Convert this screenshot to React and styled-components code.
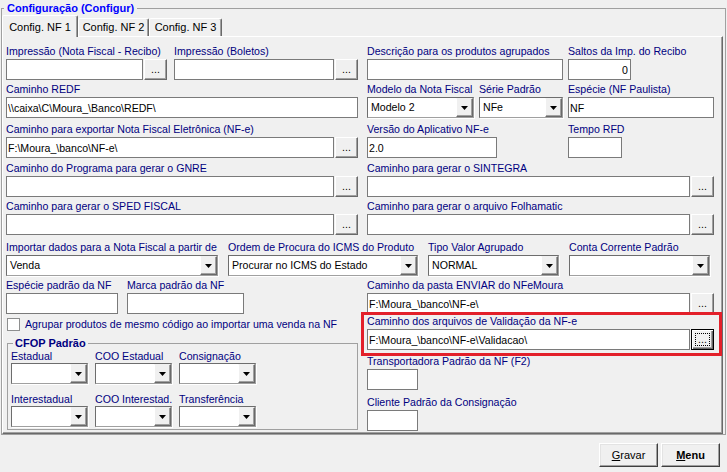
import React from "react";
import styled, { createGlobalStyle, css } from "styled-components";

const GlobalStyle = createGlobalStyle`
  html, body {
    margin: 0;
    padding: 0;
    background: #f0f0f0;
  }
  body {
    font-family: "Liberation Sans", Arial, sans-serif;
    font-size: 10.6px;
    color: #000;
  }
  * {
    box-sizing: border-box;
  }
`;

const Window = styled.div`
  width: 727px;
  height: 472px;
  background: #f0f0f0;
  display: flex;
  flex-direction: column;
  overflow: hidden;
`;

const GroupBox = styled.fieldset`
  margin: 2px 1px 0 1px;
  padding: 0;
  border: 1px solid #a0a0a0;
  min-width: 0;
`;

const Title = styled.legend`
  margin-left: 2px;
  padding: 0 3px;
  font-weight: bold;
  font-size: 11px;
  line-height: 13px;
  color: #0000ff;
`;

const TabStrip = styled.div`
  display: flex;
  align-items: flex-end;
  height: 21px;
`;

const Tab = styled.div`
  position: relative;
  z-index: ${p => (p.$active ? 1 : 0)};
  width: ${p => p.$w}px;
  height: ${p => (p.$active ? 22 : 18)}px;
  margin-bottom: ${p => (p.$active ? -1 : 0)}px;
  padding-top: ${p => (p.$active ? 1 : 0)}px;
  display: flex;
  align-items: center;
  justify-content: center;
  background: #f0f0f0;
  border: 1px solid;
  border-bottom: none;
  border-color: #fff #696969 transparent #fff;
  border-radius: 2px 2px 0 0;
  box-shadow: inset -1px 0 #a0a0a0;
  font-size: 11px;
  line-height: 13px;
  white-space: nowrap;
`;

const TabPage = styled.div`
  width: 721px;
  height: 398px;
  border: 1px solid;
  border-color: #fff #696969 #696969 #fff;
  box-shadow: inset -1px -1px #a0a0a0;
  padding: 8px 0 0 3px;
`;

const Row = styled.div`
  display: flex;
  gap: ${p => (p.$gap !== undefined ? p.$gap : 9)}px;
  margin-top: ${p => p.$mt || 0}px;
`;

const Half = styled.div`
  display: flex;
  flex: none;
  width: ${p => p.$w}px;
  gap: ${p => p.$gap || 0}px;
`;

const Column = styled.div`
  display: flex;
  flex-direction: column;
  flex: none;
  width: ${p => p.$w}px;
`;

const Field = styled.div`
  display: flex;
  flex-direction: column;
  flex: none;
  width: ${p => (p.$w ? `${p.$w}px` : "auto")};
  margin-top: ${p => p.$mt || 0}px;

  ${p =>
    p.$highlight &&
    css`
      position: relative;
      &::after {
        content: "";
        position: absolute;
        top: -3px;
        left: -6px;
        right: -8px;
        bottom: -6px;
        border: 3px solid #e3202a;
        pointer-events: none;
      }
    `}
`;

const Label = styled.label`
  display: block;
  height: 13px;
  line-height: 13px;
  margin-bottom: ${p => (p.$mb !== undefined ? p.$mb : 1)}px;
  color: #000080;
  white-space: nowrap;
`;

const InputGroup = styled.div`
  display: flex;
  gap: 1px;
`;

const Edit = styled.input`
  display: block;
  width: ${p => (p.$w ? `${p.$w}px` : "100%")};
  flex: ${p => (p.$grow ? "1" : "none")};
  min-width: 0;
  height: 21px;
  margin: 0;
  padding: 0 2px 0 1px;
  border: 1px solid #7a7a7a;
  background: #fff;
  font: inherit;
  color: #000;
  text-align: ${p => (p.$right ? "right" : "left")};
  outline: none;
`;

const Browse = styled.button`
  flex: none;
  width: 23px;
  height: 21px;
  margin: 0;
  padding: 0;
  background: #f0f0f0;
  border: 1px solid;
  border-color: #fff #696969 #696969 #fff;
  box-shadow: inset -1px -1px #a0a0a0;
  font: inherit;
  line-height: 13px;
  color: #000;

  ${p =>
    p.$focused &&
    css`
      position: relative;
      border-color: #000;
      box-shadow: inset 1px 1px #fff, inset -1px -1px #696969,
        inset -2px -2px #a0a0a0;
      &::after {
        content: "";
        position: absolute;
        top: 3px;
        left: 3px;
        right: 3px;
        bottom: 3px;
        border: 1px dotted #000;
      }
    `}
`;

const ComboBox = styled.div`
  display: flex;
  width: 100%;
  height: 21px;
  background: #fff;
  border: 1px solid;
  border-color: #6d6d6d #a0a0a0 #a0a0a0 #6d6d6d;
  box-shadow: 1px 1px 0 #fff;
`;

const ComboText = styled.span`
  flex: 1;
  min-width: 0;
  padding-left: 3px;
  line-height: 19px;
  white-space: nowrap;
  overflow: hidden;
`;

const ComboArrow = styled.span`
  flex: none;
  width: 17px;
  height: 100%;
  display: flex;
  align-items: center;
  justify-content: center;
  background: #f0f0f0;
  border: 1px solid;
  border-color: #f0f0f0 #696969 #696969 #fff;
  box-shadow: inset -1px -1px #a0a0a0;
`;

const CheckRow = styled.div`
  display: flex;
  align-items: center;
  gap: 5px;
  margin: 4px 0 0 1px;
  color: #000080;
  line-height: 13px;
  white-space: nowrap;
`;

const CheckBox = styled.span`
  flex: none;
  width: 13px;
  height: 13px;
  background: #fff;
  border: 1px solid #8e8f8f;
`;

const SubGroup = styled.fieldset`
  width: 351px;
  margin: 6px 0 0 1px;
  padding: 0 3px 2px 3px;
  border: 1px solid #a0a0a0;
  min-width: 0;
`;

const SubTitle = styled.legend`
  margin-left: 2px;
  padding: 0 2px;
  font-weight: bold;
  font-size: 11px;
  line-height: 13px;
  color: #000080;
`;

const CfopGrid = styled.div`
  display: grid;
  grid-template-columns: repeat(3, 77px);
  column-gap: 7px;
  row-gap: 9px;
`;

const Footer = styled.div`
  display: flex;
  justify-content: flex-end;
  gap: 3px;
  padding: 8px 7px 0 0;
`;

const Button = styled.button`
  width: 59px;
  height: 24px;
  margin: 0;
  padding: 0;
  background: #f0f0f0;
  border: 1px solid;
  border-color: #fff #404040 #404040 #fff;
  box-shadow: inset -1px -1px #a0a0a0, inset 1px 1px #e3e3e3;
  font: inherit;
  font-size: 11px;
  font-weight: ${p => (p.$bold ? "bold" : "normal")};
  color: #000;
`;

const Arrow = () => (
  <svg width="7" height="4" viewBox="0 0 7 4">
    <polygon points="0,0 7,0 3.5,4" fill="#000" />
  </svg>
);

const Combo = ({ value }) => (
  <ComboBox>
    <ComboText>{value}</ComboText>
    <ComboArrow>
      <Arrow />
    </ComboArrow>
  </ComboBox>
);

const PathField = ({ label, value = "", w, focused, highlight, mt }) => (
  <Field $w={w} $highlight={highlight} $mt={mt}>
    <Label>{label}</Label>
    <InputGroup>
      <Edit value={value} readOnly $grow />
      <Browse $focused={focused}>...</Browse>
    </InputGroup>
  </Field>
);

const TextField = ({ label, value = "", w, inputW, right, mt }) => (
  <Field $w={w} $mt={mt}>
    <Label>{label}</Label>
    <Edit value={value} readOnly $w={inputW} $right={right} />
  </Field>
);

const ComboField = ({ label, value = "", w, mb }) => (
  <Field $w={w}>
    <Label $mb={mb}>{label}</Label>
    <Combo value={value} />
  </Field>
);

const NFE = "F:\\Moura_\\banco\\NF-e\\";

const App = () => {
  return (
    <>
      <GlobalStyle />
      <Window>
        <GroupBox>
          <Title>Configuração (Configur)</Title>
          <TabStrip>
            <Tab $active $w={76}>Config. NF 1</Tab>
            <Tab $w={71}>Config. NF 2</Tab>
            <Tab $w={73}>Config. NF 3</Tab>
          </TabStrip>
          <TabPage>
            <Row>
              <Half $w={352} $gap={7}>
                <PathField label="Impressão (Nota Fiscal - Recibo)" w={161} />
                <PathField label="Impressão (Boletos)" w={184} />
              </Half>
              <Half $w={348} $gap={5}>
                <TextField label="Descrição para os produtos agrupados" w={196} />
                <TextField label="Saltos da Imp. do Recibo" w={63} value="0" right />
              </Half>
            </Row>

            <Row $mt={3}>
              <Half $w={352}>
                <TextField
                  label="Caminho REDF"
                  w={352}
                  value={"\\\\caixa\\C\\Moura_\\Banco\\REDF\\"}
                />
              </Half>
              <Half $w={348} $gap={5}>
                <ComboField label="Modelo da Nota Fiscal" w={107} value="Modelo 2" />
                <ComboField label="Série Padrão" w={84} value="NFe" />
                <TextField label="Espécie (NF Paulista)" w={146} value="NF" />
              </Half>
            </Row>

            <Row $mt={5}>
              <Half $w={352}>
                <PathField
                  label="Caminho para exportar Nota Fiscal Eletrônica (NF-e)"
                  w={352}
                  value={NFE}
                />
              </Half>
              <Half $w={348}>
                <TextField label="Versão do Aplicativo NF-e" w={201} inputW={130} value="2.0" />
                <TextField label="Tempo RFD" w={54} />
              </Half>
            </Row>

            <Row $mt={4}>
              <Half $w={352}>
                <PathField label="Caminho do Programa para gerar o GNRE" w={352} />
              </Half>
              <Half $w={348}>
                <PathField label="Caminho para gerar o SINTEGRA" w={347} />
              </Half>
            </Row>

            <Row $mt={3}>
              <Half $w={352}>
                <PathField label="Caminho para gerar o SPED FISCAL" w={352} />
              </Half>
              <Half $w={348}>
                <PathField label="Caminho para gerar o arquivo Folhamatic" w={347} />
              </Half>
            </Row>

            <Row $mt={6} $gap={10}>
              <ComboField
                label="Importar dados para a Nota Fiscal a partir de"
                w={212}
                value="Venda"
              />
              <ComboField
                label="Ordem de Procura do ICMS do Produto"
                w={190}
                value="Procurar no ICMS do Estado"
              />
              <ComboField label="Tipo Valor Agrupado" w={131} value="NORMAL" />
              <ComboField label="Conta Corrente Padrão" w={141} />
            </Row>

            <Row $mt={3}>
              <Column $w={352}>
                <Half $w={352} $gap={9}>
                  <TextField label="Espécie padrão da NF" w={112} />
                  <TextField label="Marca padrão da NF" w={117} />
                </Half>
                <CheckRow>
                  <CheckBox />
                  Agrupar produtos de mesmo código ao importar uma venda na NF
                </CheckRow>
                <SubGroup>
                  <SubTitle>CFOP Padrão</SubTitle>
                  <CfopGrid>
                    <ComboField label="Estadual" mb={0} />
                    <ComboField label="COO Estadual" mb={0} />
                    <ComboField label="Consignação" mb={0} />
                    <ComboField label="Interestadual" mb={0} />
                    <ComboField label="COO Interestad." mb={0} />
                    <ComboField label="Transferência" mb={0} />
                  </CfopGrid>
                </SubGroup>
              </Column>

              <Column $w={348}>
                <PathField
                  label="Caminho da pasta ENVIAR do NFeMoura"
                  w={347}
                  value={NFE}
                />
                <PathField
                  label="Caminho dos arquivos de Validação da NF-e"
                  w={347}
                  value={"F:\\Moura_\\banco\\NF-e\\Validacao\\"}
                  focused
                  highlight
                  mt={1}
                />
                <TextField label="Transportadora Padrão da NF (F2)" inputW={51} mt={5} />
                <TextField label="Cliente Padrão da Consignação" inputW={51} mt={6} />
              </Column>
            </Row>
          </TabPage>
        </GroupBox>

        <Footer>
          <Button>
            <u>G</u>ravar
          </Button>
          <Button $bold>
            <u>M</u>enu
          </Button>
        </Footer>
      </Window>
    </>
  );
};

export default App;
